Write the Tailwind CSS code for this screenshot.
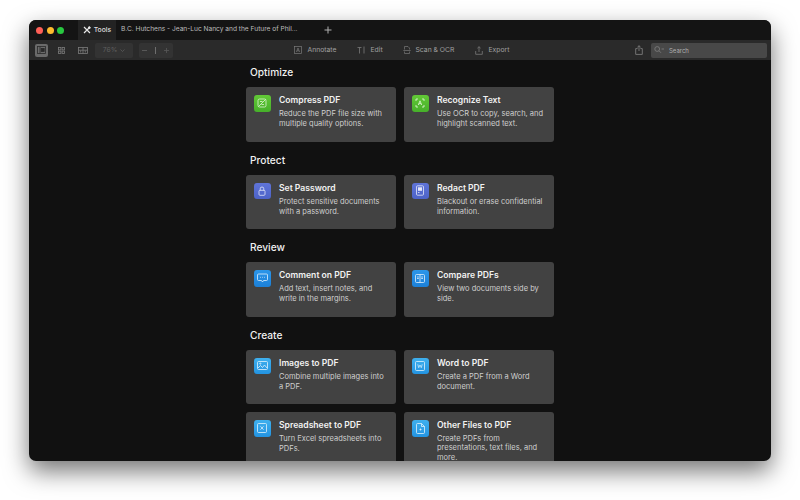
<!DOCTYPE html>
<html><head><meta charset="utf-8"><script src="https://cdn.jsdelivr.net/npm/@tailwindcss/browser@4"></script></head>
<body class="w-[800px] h-[500px] overflow-hidden bg-white font-['Inter',sans-serif]">
<div class="pt-5 pl-[29px]">
<div class="w-[742px] h-[441px] rounded-[7px] overflow-hidden bg-[#111111] shadow-[0_10px_24px_rgba(0,0,0,0.55)] flex flex-col">
  <!-- tab bar -->
  <div class="h-5 bg-[#141414] flex items-center shrink-0">
    <div class="flex items-center gap-[3.500px] w-[48.700px] pl-[7px]">
      <span class="w-[7px] h-[7px] rounded-full bg-[#ff5f57]"></span>
      <span class="w-[7px] h-[7px] rounded-full bg-[#febc2e]"></span>
      <span class="w-[7px] h-[7px] rounded-full bg-[#28c840]"></span>
    </div>
    <div class="h-5 w-[38px] bg-[#232323] flex items-center pl-[5px] gap-[3px] text-[6.800px] font-medium text-[#dddddd] whitespace-nowrap">
      <svg width="8" height="8" viewBox="0 0 8 8" fill="none" stroke="#e8e8e8" stroke-width="1.2"><path d="M1 7 7 1M1 1l6 6"/><path d="M5.500.8 7.200 2.500" stroke-width="2"/></svg>
      <span>Tools</span>
    </div>
    <div class="w-[208px] pl-[5.300px] text-[6.600px] text-[#bdbdbd] whitespace-nowrap">B.C. Hutchens - Jean-Luc Nancy and the Future of Phil...</div>
    <svg width="8" height="8" viewBox="0 0 8 8" stroke="#b0b0b0" stroke-width="1"><path d="M4 .5v7M.5 4h7"/></svg>
  </div>
  <!-- toolbar -->
  <div class="h-[20px] bg-[#2a2a2a] flex items-center shrink-0 text-[6.800px] text-[#a0a0a0] whitespace-nowrap">
    <div class="ml-[6px] w-[13px] h-[13px] rounded-[2px] bg-[#6a6a6a] flex items-center justify-center">
      <svg width="9" height="8" viewBox="0 0 9 8" fill="none" stroke="#2a2a2a" stroke-width=".8"><rect x=".5" y=".5" width="8" height="7"/><path d="M3 .5v7"/><rect x="4.200" y="2.500" width="3" height="3" fill="#2a2a2a"/></svg>
    </div>
    <svg class="ml-[10px]" width="7" height="7" viewBox="0 0 7 7" fill="none" stroke="#7c7c7c" stroke-width=".8"><rect x=".5" y=".5" width="2.400" height="2.400"/><rect x="4.100" y=".5" width="2.400" height="2.400"/><rect x=".5" y="4.100" width="2.400" height="2.400"/><rect x="4.100" y="4.100" width="2.400" height="2.400"/></svg>
    <svg class="ml-[13px]" width="10" height="7" viewBox="0 0 10 7" fill="none" stroke="#7c7c7c" stroke-width=".8"><rect x=".5" y=".5" width="9" height="6"/><path d="M5 .5v6M.5 3.200h9"/><path d="M2.700 3.500v2M7.300 3.500v2"/></svg>
    <div class="ml-[7px] w-[38px] h-[15px] rounded-[2px] bg-[#333333] flex items-center justify-center gap-[3px] text-[#5f5f5f]">
      <span>76%</span><svg width="5" height="3" viewBox="0 0 5 3" fill="none" stroke="#5f5f5f" stroke-width=".7"><path d="M.5.5 2.500 2.500 4.500.5"/></svg>
    </div>
    <div class="ml-[6px] w-[33.500px] h-[15px] rounded-[2px] bg-[#333333] flex items-center justify-center gap-[8px]">
      <svg width="5" height="1" viewBox="0 0 5 1"><path d="M0 .5h5" stroke="#585858"/></svg>
      <span class="w-px h-[7px] bg-[#6e6e6e]"></span>
      <svg width="5" height="5" viewBox="0 0 5 5"><path d="M0 2.500h5M2.500 0v5" stroke="#585858" stroke-width=".8"/></svg>
    </div>
    <div class="ml-[121px] flex items-center gap-[6px]">
      <svg width="8" height="8" viewBox="0 0 8 8" fill="none" stroke="#7a7a7a" stroke-width=".7"><rect x=".5" y=".5" width="7" height="7"/><path d="M2.400 6 4 2l1.600 4M3 4.800h2"/></svg>
      <span class="w-[30px] -translate-y-[0.5px]">Annotate</span>
    </div>
    <div class="ml-[19px] flex items-center gap-[6px]">
      <svg width="8" height="8" viewBox="0 0 8 8" fill="none" stroke="#7a7a7a" stroke-width=".8"><path d="M.5 1.500h4M2.500 1.500V7.500M7 .5v7"/></svg>
      <span class="w-[12px] -translate-y-[0.5px]">Edit</span>
    </div>
    <div class="ml-[20px] flex items-center gap-[5px]">
      <svg width="8" height="8" viewBox="0 0 8 8" fill="none" stroke="#7a7a7a" stroke-width=".7"><path d="M1.500 3.500V.5h3.500l1.500 1.500v1.500M.3 4.500h7.400M1.500 5.500v2h5v-2"/></svg>
      <span class="w-[40px] -translate-y-[0.5px]">Scan &amp; OCR</span>
    </div>
    <div class="ml-[19px] flex items-center gap-[6px]">
      <svg width="8" height="9" viewBox="0 0 8 9" fill="none" stroke="#7a7a7a" stroke-width=".8"><path d="M4 6V.8M2.400 2.200 4 .7l1.600 1.500M.7 5v3.300h6.600V5"/></svg>
      <span class="w-[21px] -translate-y-[0.5px]">Export</span>
    </div>
    <svg class="ml-[125px]" width="8" height="10" viewBox="0 0 8 10" fill="none" stroke="#858585" stroke-width=".8"><path d="M4 6V.8M2.400 2.200 4 .7l1.600 1.500M2.600 3.600H.7v5.800h6.600V3.600H5.400"/></svg>
    <div class="ml-[8.500px] w-[116px] h-[15px] rounded-[2px] bg-[#484848] flex items-center pl-[3px] gap-[5px] text-[6px] text-[#b0b0b0]">
      <svg width="10" height="8" viewBox="0 0 10 8" fill="none" stroke="#808080" stroke-width=".8"><circle cx="3.200" cy="3" r="2.400"/><path d="m5 4.800 2 2M7.500 3H10"/></svg>
      <span>Search</span>
    </div>
  </div>
  <!-- content -->
  <div class="flex-1 overflow-hidden pl-[217px] w-[525px] text-white">
    <h2 class="mt-[6px] ml-1 h-[13px] text-[10.200px] leading-[13px] font-medium text-[#f0f0f0]">Optimize</h2>
    <div class="mt-[8px] grid grid-cols-2 gap-x-2 w-[308px]">
      <div class="h-[54.5px] rounded-[3px] bg-[#424242] flex pl-2 pt-2 gap-[8.500px]">
        <div class="w-[16.500px] h-[16.500px] shrink-0 rounded-[3px] bg-gradient-to-b from-[#62c936] to-[#46b02a] flex items-center justify-center"><svg width="10" height="10" viewBox="0 0 10 10" fill="none" stroke="#dff5d5" stroke-width=".8"><rect x="1" y="1" width="8" height="8" rx="1.500"/><path d="M1.500 8.500l7-7M3 3.500h2.500M7 6.500H4.500"/></svg></div>
        <div><div class="text-[8.600px] leading-[11px] font-semibold text-[#f2f2f2]">Compress PDF</div><p class="mt-[3px] text-[7.500px] leading-[10px] text-[#cfcfcf]">Reduce the PDF file size with<br>multiple quality options.</p></div>
      </div>
      <div class="h-[54.5px] rounded-[3px] bg-[#424242] flex pl-2 pt-2 gap-[8.500px]">
        <div class="w-[16.500px] h-[16.500px] shrink-0 rounded-[3px] bg-gradient-to-b from-[#62c936] to-[#46b02a] flex items-center justify-center"><svg width="10" height="10" viewBox="0 0 10 10" fill="none" stroke="#e6f7dc" stroke-width=".8"><path d="M1 3V1h2M7 1h2v2M9 7v2H7M3 9H1V7M3.300 7 5 2.800 6.700 7M3.900 5.700h2.200"/></svg></div>
        <div><div class="text-[8.600px] leading-[11px] font-semibold text-[#f2f2f2]">Recognize Text</div><p class="mt-[3px] text-[7.500px] leading-[10px] text-[#cfcfcf]">Use OCR to copy, search, and<br>highlight scanned text.</p></div>
      </div>
    </div>
    <h2 class="mt-[12px] ml-1 h-[13px] text-[10.200px] leading-[13px] font-medium text-[#f0f0f0]">Protect</h2>
    <div class="mt-[8px] grid grid-cols-2 gap-x-2 w-[308px]">
      <div class="h-[54.5px] rounded-[3px] bg-[#424242] flex pl-2 pt-2 gap-[8.500px]">
        <div class="w-[16.500px] h-[16.500px] shrink-0 rounded-[3px] bg-gradient-to-b from-[#5f74d8] to-[#4d63c8] flex items-center justify-center"><svg width="10" height="10" viewBox="0 0 10 10" fill="none" stroke="#e4e8fa" stroke-width=".8"><rect x="2" y="4.300" width="6" height="5" rx="1"/><path d="M3.200 4.300V2.800a1.800 1.800 0 0 1 3.600 0v1.500"/></svg></div>
        <div><div class="text-[8.600px] leading-[11px] font-semibold text-[#f2f2f2]">Set Password</div><p class="mt-[3px] text-[7.500px] leading-[10px] text-[#cfcfcf]">Protect sensitive documents<br>with a password.</p></div>
      </div>
      <div class="h-[54.5px] rounded-[3px] bg-[#424242] flex pl-2 pt-2 gap-[8.500px]">
        <div class="w-[16.500px] h-[16.500px] shrink-0 rounded-[3px] bg-gradient-to-b from-[#5f74d8] to-[#4d63c8] flex items-center justify-center"><svg width="10" height="11" viewBox="0 0 10 11" fill="none" stroke="#e4e8fa" stroke-width=".8"><rect x="1.500" y=".8" width="7" height="9.400" rx="1"/><rect x="3" y="2.300" width="4" height="3.500" fill="#e4e8fa" stroke="none"/><path d="M3 7.500h1.500"/></svg></div>
        <div><div class="text-[8.600px] leading-[11px] font-semibold text-[#f2f2f2]">Redact PDF</div><p class="mt-[3px] text-[7.500px] leading-[10px] text-[#cfcfcf]">Blackout or erase confidential<br>information.</p></div>
      </div>
    </div>
    <h2 class="mt-[12px] ml-1 h-[13px] text-[10.200px] leading-[13px] font-medium text-[#f0f0f0]">Review</h2>
    <div class="mt-[8px] grid grid-cols-2 gap-x-2 w-[308px]">
      <div class="h-[54.5px] rounded-[3px] bg-[#424242] flex pl-2 pt-2 gap-[8.500px]">
        <div class="w-[16.500px] h-[16.500px] shrink-0 rounded-[3px] bg-gradient-to-b from-[#2b96ea] to-[#1c80d8] flex items-center justify-center"><svg width="11" height="10" viewBox="0 0 11 10" fill="none" stroke="#e0f0fc" stroke-width=".8"><path d="M1.500 1h8a1 1 0 0 1 1 1v4.500a1 1 0 0 1-1 1H6.500L5.500 9l-1-1.500h-3a1 1 0 0 1-1-1V2a1 1 0 0 1 1-1z"/><path d="M3 4.300h.8M5.100 4.300h.8M7.200 4.300H8"/></svg></div>
        <div><div class="text-[8.600px] leading-[11px] font-semibold text-[#f2f2f2]">Comment on PDF</div><p class="mt-[3px] text-[7.500px] leading-[10px] text-[#cfcfcf]">Add text, insert notes, and<br>write in the margins.</p></div>
      </div>
      <div class="h-[54.5px] rounded-[3px] bg-[#424242] flex pl-2 pt-2 gap-[8.500px]">
        <div class="w-[16.500px] h-[16.500px] shrink-0 rounded-[3px] bg-gradient-to-b from-[#2b96ea] to-[#1c80d8] flex items-center justify-center"><svg width="10" height="9" viewBox="0 0 10 9" fill="none" stroke="#e0f0fc" stroke-width=".8"><rect x=".5" y=".5" width="9" height="8" rx="1"/><path d="M5 .5v8M2 3h1.800M2 4.500h1.800M6.200 3H8M6.200 4.500H8"/></svg></div>
        <div><div class="text-[8.600px] leading-[11px] font-semibold text-[#f2f2f2]">Compare PDFs</div><p class="mt-[3px] text-[7.500px] leading-[10px] text-[#cfcfcf]">View two documents side by<br>side.</p></div>
      </div>
    </div>
    <h2 class="mt-[12px] ml-1 h-[13px] text-[10.200px] leading-[13px] font-medium text-[#f0f0f0]">Create</h2>
    <div class="mt-[8px] grid grid-cols-2 gap-x-2 gap-y-[8px] w-[308px]">
      <div class="h-[54.5px] rounded-[3px] bg-[#424242] flex pl-2 pt-2 gap-[8.500px]">
        <div class="w-[16.500px] h-[16.500px] shrink-0 rounded-[3px] bg-gradient-to-b from-[#3fb0ee] to-[#2394e2] flex items-center justify-center"><svg width="11" height="9" viewBox="0 0 11 9" fill="none" stroke="#e0f3fd" stroke-width=".8"><rect x=".5" y=".5" width="10" height="8" rx="1"/><path d="m1 7 2.500-2.500L5.500 6.500 7.500 4l2.500 3"/><circle cx="3.300" cy="2.600" r=".6"/></svg></div>
        <div><div class="text-[8.600px] leading-[11px] font-semibold text-[#f2f2f2]">Images to PDF</div><p class="mt-[3px] text-[7.500px] leading-[10px] text-[#cfcfcf]">Combine multiple images into<br>a PDF.</p></div>
      </div>
      <div class="h-[54.5px] rounded-[3px] bg-[#424242] flex pl-2 pt-2 gap-[8.500px]">
        <div class="w-[16.500px] h-[16.500px] shrink-0 rounded-[3px] bg-gradient-to-b from-[#3fb0ee] to-[#2394e2] flex items-center justify-center"><svg width="10" height="10" viewBox="0 0 10 10" fill="none" stroke="#e0f3fd" stroke-width=".8"><rect x=".5" y=".5" width="9" height="9" rx="1"/><path d="m2.800 3.300.9 3.400L5 4l1.300 2.700.9-3.400" stroke-width=".7"/></svg></div>
        <div><div class="text-[8.600px] leading-[11px] font-semibold text-[#f2f2f2]">Word to PDF</div><p class="mt-[3px] text-[7.500px] leading-[10px] text-[#cfcfcf]">Create a PDF from a Word<br>document.</p></div>
      </div>
      <div class="h-[54.5px] rounded-[3px] bg-[#424242] flex pl-2 pt-2 gap-[8.500px]">
        <div class="w-[16.500px] h-[16.500px] shrink-0 rounded-[3px] bg-gradient-to-b from-[#3fb0ee] to-[#2394e2] flex items-center justify-center"><svg width="10" height="10" viewBox="0 0 10 10" fill="none" stroke="#e0f3fd" stroke-width=".8"><rect x=".5" y=".5" width="9" height="9" rx="1"/><path d="m3.500 3.300 3 3.400M6.500 3.300l-3 3.400"/></svg></div>
        <div><div class="text-[8.600px] leading-[11px] font-semibold text-[#f2f2f2]">Spreadsheet to PDF</div><p class="mt-[3px] text-[7.500px] leading-[10px] text-[#cfcfcf]">Turn Excel spreadsheets into<br>PDFs.</p></div>
      </div>
      <div class="h-[54.5px] rounded-[3px] bg-[#424242] flex pl-2 pt-2 gap-[8.500px]">
        <div class="w-[16.500px] h-[16.500px] shrink-0 rounded-[3px] bg-gradient-to-b from-[#3fb0ee] to-[#2394e2] flex items-center justify-center"><svg width="9" height="11" viewBox="0 0 9 11" fill="none" stroke="#e0f3fd" stroke-width=".8"><path d="M1.500.5h4l3 3v6a1 1 0 0 1-1 1h-6a1 1 0 0 1-1-1v-8a1 1 0 0 1 1-1zM5.500.5v3h3"/><path d="M3.500 6.500h2M4.500 5.500v2"/></svg></div>
        <div><div class="text-[8.600px] leading-[11px] font-semibold text-[#f2f2f2]">Other Files to PDF</div><p class="mt-[2.500px] text-[7.500px] leading-[9.900px] text-[#cfcfcf]">Create PDFs from<br>presentations, text files, and<br>more.</p></div>
      </div>
    </div>
  </div>
</div>
</div>
</body></html>
